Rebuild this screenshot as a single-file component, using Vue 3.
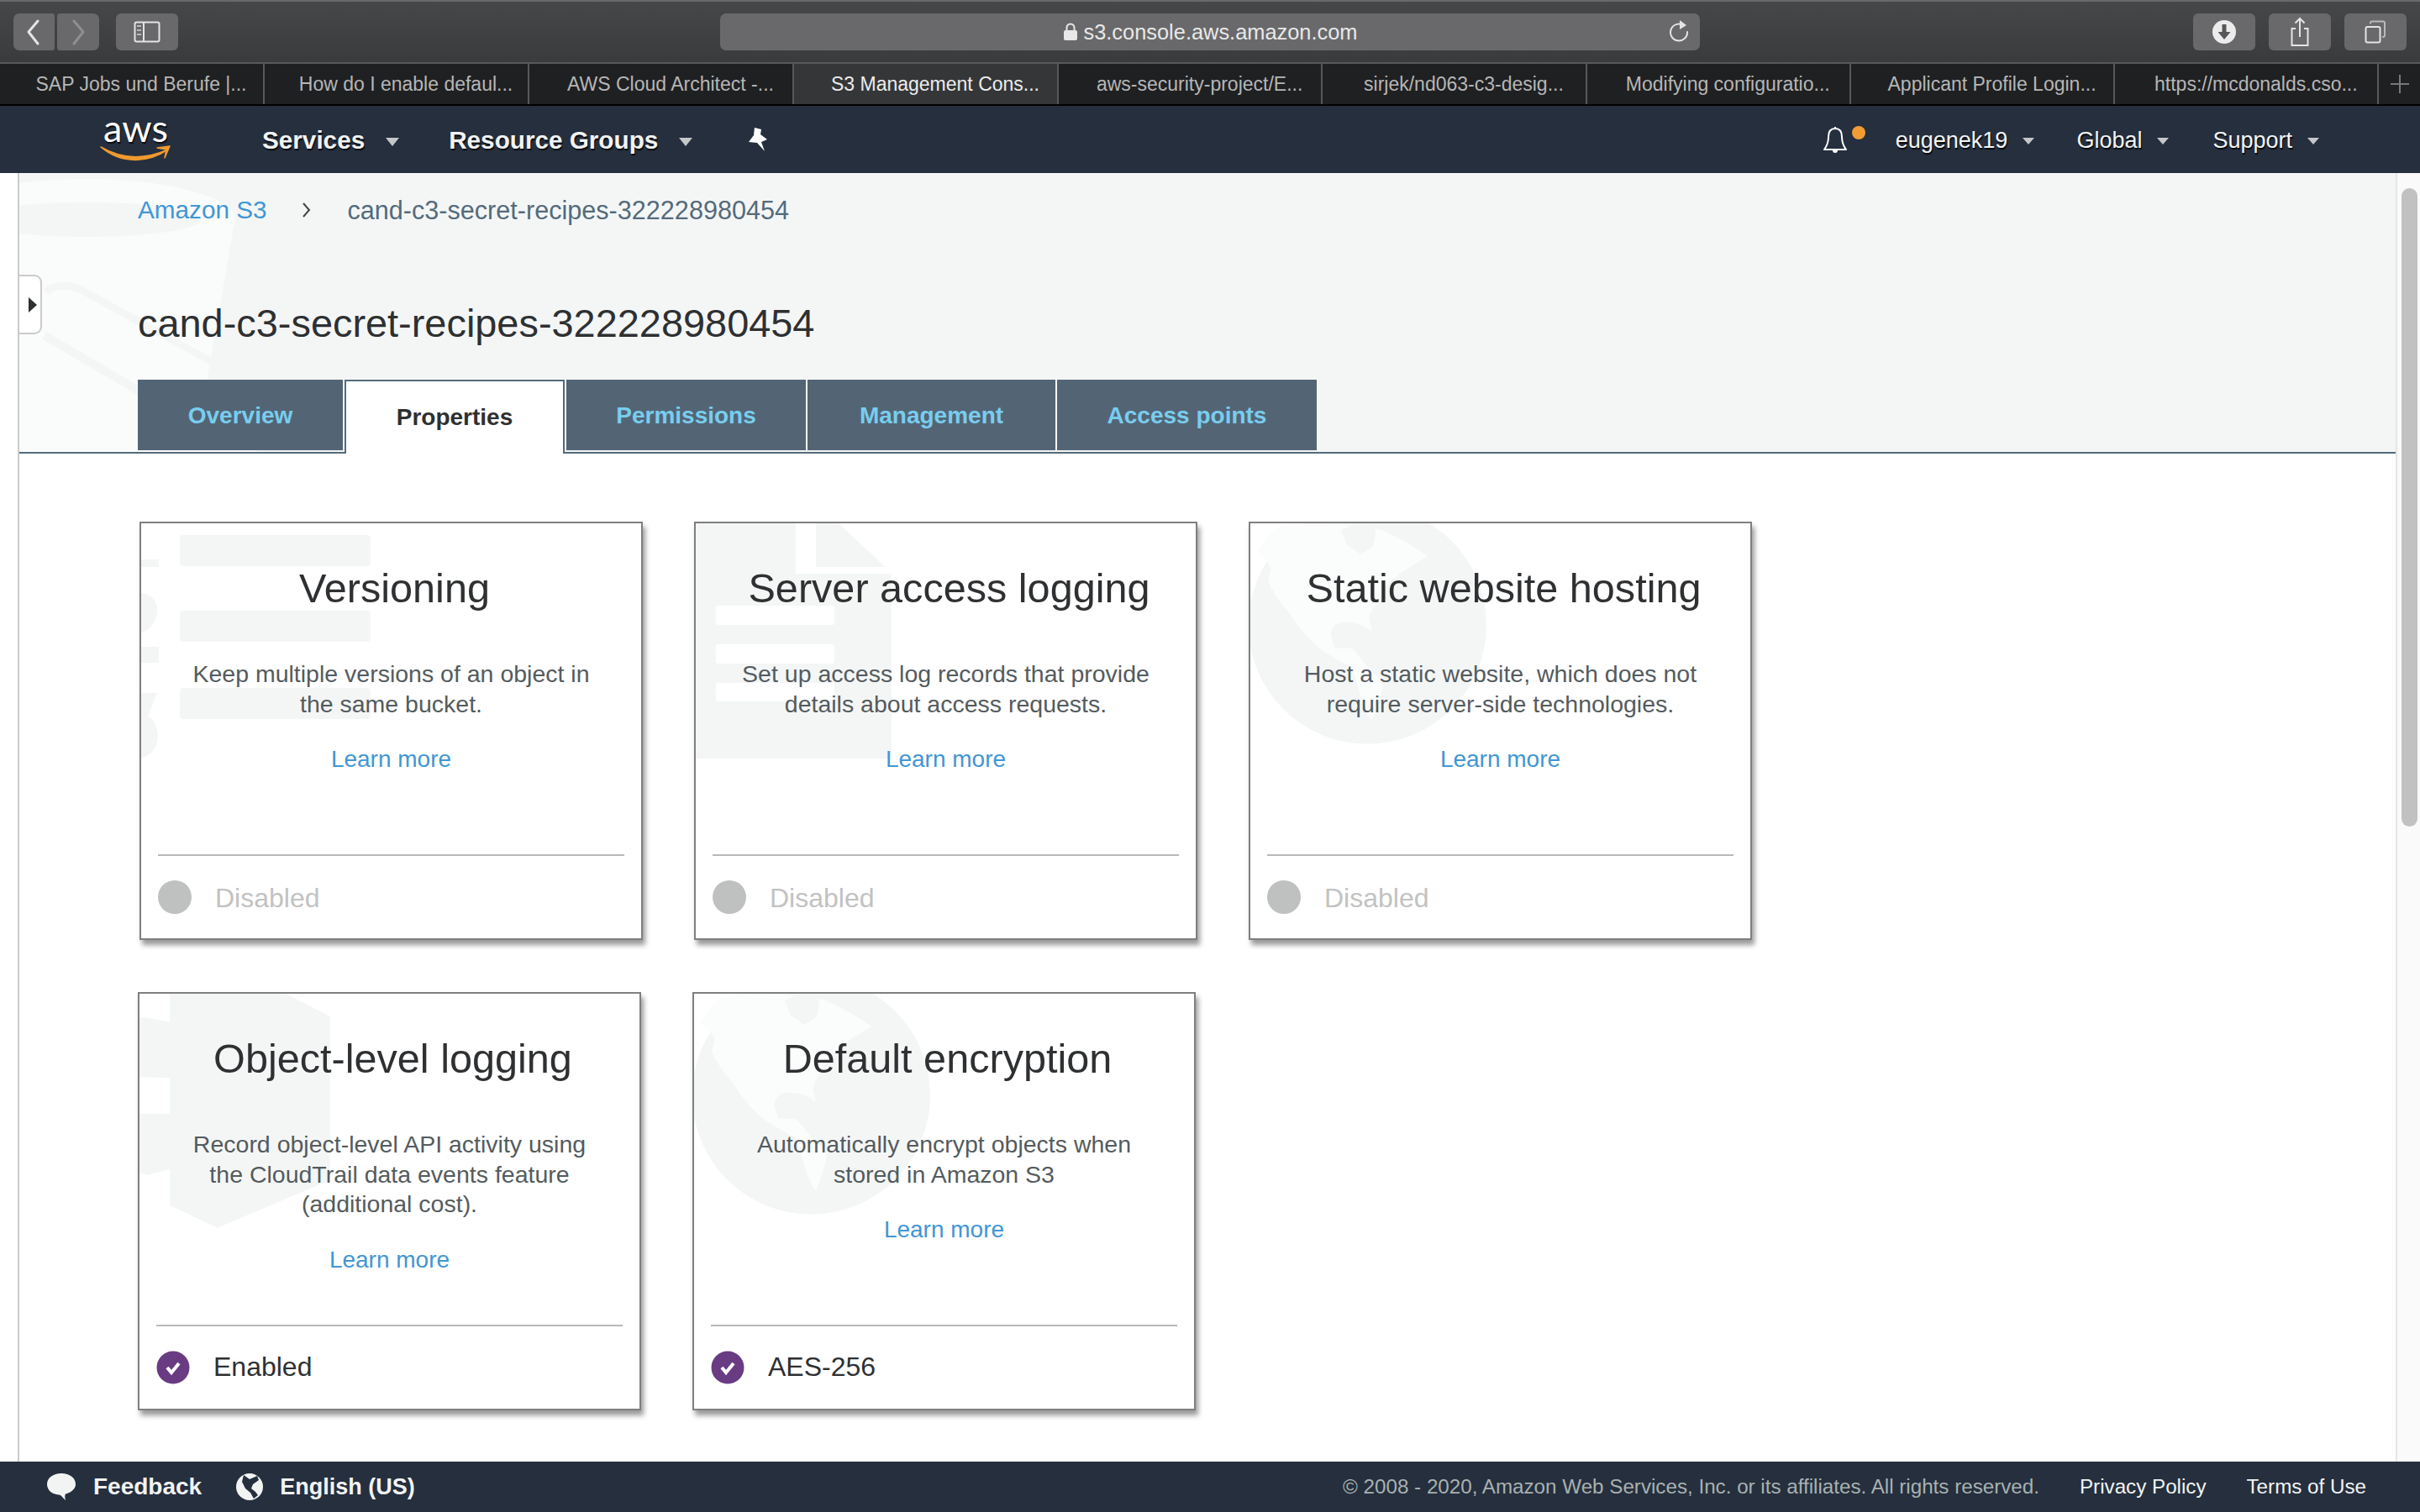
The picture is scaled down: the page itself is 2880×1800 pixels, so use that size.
<template>
  <div class="app">
    <!-- Safari toolbar -->
    <div class="toolbar">
      <div class="tool-btn nav-back">
        <svg width="24" height="34" viewBox="0 0 24 34"><polyline points="16,4 5,17 16,31" fill="none" stroke="#e4e4e4" stroke-width="3" stroke-linecap="round" stroke-linejoin="round" /></svg>
      </div>
      <div class="tool-btn nav-forward">
        <svg width="24" height="34" viewBox="0 0 24 34"><polyline points="7,4 18,17 7,31" fill="none" stroke="#8f8f91" stroke-width="3" stroke-linecap="round" stroke-linejoin="round" /></svg>
      </div>
      <div class="tool-btn sidebar-btn">
        <svg width="32" height="26" viewBox="0 0 32 26">
          <rect x="1.5" y="1.5" width="29" height="23" rx="2" fill="none" stroke="#e4e4e4" stroke-width="2" />
          <line x1="12" y1="1.5" x2="12" y2="24.5" stroke="#e4e4e4" stroke-width="2" />
          <path d="M4 6h5M4 11h5M4 16h5" stroke="#b9b9b9" stroke-width="2" />
        </svg>
      </div>
      <div class="url-bar">
        <svg class="lock" width="18" height="22" viewBox="0 0 18 22">
          <rect x="1" y="9" width="16" height="12" rx="2" fill="#e8e8e8" />
          <path d="M4.5 9V6a4.5 4.5 0 0 1 9 0v3" fill="none" stroke="#e8e8e8" stroke-width="2" />
        </svg>
        <span>s3.console.aws.amazon.com</span>
        <svg class="reload" width="26" height="30" viewBox="0 0 26 30">
          <path d="M19 8.5A10 10 0 1 0 23 16" fill="none" stroke="#e4e4e4" stroke-width="2" stroke-linecap="round" />
          <polygon points="14,2 22,8 14,13" fill="#e4e4e4" />
        </svg>
      </div>
      <div class="tool-btn action-btn download-btn">
        <svg width="30" height="30" viewBox="0 0 30 30">
          <circle cx="15" cy="15" r="14" fill="#ececec" />
          <path d="M12.5 6h5v9h5L15 24 7.5 15h5z" fill="#58585a" />
        </svg>
      </div>
      <div class="tool-btn action-btn">
        <svg width="24" height="36" viewBox="0 0 24 36">
          <path d="M7 14H2.5v20h19V14H17" fill="none" stroke="#e4e4e4" stroke-width="2" />
          <path d="M12 24V2M6.5 7.5 12 2l5.5 5.5" fill="none" stroke="#e4e4e4" stroke-width="2" />
        </svg>
      </div>
      <div class="tool-btn action-btn">
        <svg width="26" height="28" viewBox="0 0 26 28">
          <rect x="1.5" y="8" width="17" height="18.5" rx="2" fill="none" stroke="#e4e4e4" stroke-width="2" />
          <path d="M7 4.5V3.5a2 2 0 0 1 2-2h13a2 2 0 0 1 2 2V18a2 2 0 0 1-2 2h-1" fill="none" stroke="#b9b9b9" stroke-width="2" />
        </svg>
      </div>
    </div>

    <!-- Safari tabs -->
    <div class="browser-tabs">
      <div
        v-for="tab in browserTabs"
        :key="tab.label"
        class="browser-tab"
        :class="{ active: tab.active }"
      >{{ tab.label }}</div>
      <div class="new-tab">
        <svg width="24" height="24" viewBox="0 0 24 24"><path d="M12 1v22M1 12h22" stroke="#77787a" stroke-width="2" /></svg>
      </div>
    </div>

    <!-- AWS navbar -->
    <header class="navbar">
      <svg class="aws-logo" width="130" height="83" viewBox="0 -8 130 83">
        <text x="23" y="37" class="aws-text">aws</text>
        <path d="M20 43C42 56 68 60 100 46C74 64 42 62 20 43Z" fill="#f09a2f" stroke="#f09a2f" stroke-width="1.5" stroke-linejoin="round" />
        <path d="M87 44 102 42 96 56 98 46z" fill="#f09a2f" stroke="#f09a2f" stroke-width="1.5" stroke-linejoin="round" />
      </svg>
      <div class="nav-main services">Services<i class="caret"></i></div>
      <div class="nav-main groups">Resource Groups<i class="caret"></i></div>
      <svg class="pin" width="24" height="28" viewBox="0 0 24 28">
        <path d="M8 0 16 2 15 8 23 14 16 17 20 28 11 18 1 17 7 9z" fill="#fff" />
      </svg>
      <div class="nav-right">
        <svg class="bell" width="32" height="36" viewBox="0 0 32 36">
          <path d="M16 3c-6 0-8 4-8 10 0 7-2 11-5 15h26c-3-4-5-8-5-15 0-6-2-10-8-10z" fill="none" stroke="#fff" stroke-width="2" stroke-linejoin="round" />
          <path d="M16 1v2" stroke="#fff" stroke-width="2" />
          <path d="M13 29a3 3 0 0 0 6 0z" fill="#fff" />
        </svg>
        <i class="bell-dot"></i>
        <div class="nav-sub user">eugenek19<i class="caret small"></i></div>
        <div class="nav-sub region">Global<i class="caret small"></i></div>
        <div class="nav-sub support">Support<i class="caret small"></i></div>
      </div>
    </header>

    <div class="page">
      <div class="gutter"></div>
      <main class="content">
        <section class="head">
          <svg class="bucket" width="300" height="332" viewBox="0 0 900 996">
            <ellipse cx="240" cy="166" rx="530" ry="145" fill="#fafbfb" />
            <polygon points="-10,166 770,166 670,740 850,740 850,996 -10,996" fill="#fafbfb" />
            <ellipse cx="240" cy="166" rx="410" ry="62" fill="#f4f6f6" />
            <path d="M95 425C130 395 190 395 235 425L725 695C765 725 755 745 700 745" fill="none" stroke="#f4f6f6" stroke-width="26" />
            <path d="M90 580 430 780" fill="none" stroke="#f4f6f6" stroke-width="30" />
            <path d="M745 640C760 600 800 590 835 680L850 740" fill="none" stroke="#f4f6f6" stroke-width="16" />
          </svg>
          <div class="side-handle"><i></i></div>
          <nav class="crumbs">
            <a class="crumb-link">Amazon S3</a>
            <svg width="11" height="20" viewBox="0 0 11 20"><polyline points="2,2 9,10 2,18" fill="none" stroke="#444" stroke-width="2" /></svg>
            <span>cand-c3-secret-recipes-322228980454</span>
          </nav>
          <h1>cand-c3-secret-recipes-322228980454</h1>
          <div class="tabs">
            <div
              v-for="tab in tabs"
              :key="tab.label"
              class="tab"
              :class="{ selected: tab.selected }"
              :style="{ width: tab.width + 'px' }"
            >{{ tab.label }}</div>
          </div>
        </section>

        <section class="cards">
          <div v-for="(row, r) in rows" :key="r" class="card-row" :class="'row-' + r">
            <article v-for="card in row" :key="card.title" class="card">
              <!-- Versioning watermark -->
              <svg v-if="card.mark === 'list'" class="mark" width="300" height="290" viewBox="0 0 300 290">
                <rect x="46" y="14" width="227" height="37" rx="4" />
                <rect x="46" y="104" width="227" height="37" rx="4" />
                <rect x="46" y="196" width="227" height="37" rx="4" />
                <rect x="0" y="43" width="21" height="9" />
                <path d="M0 83C14 85 21 95 19 108C17 120 8 127 0 131z" />
                <rect x="0" y="147" width="21" height="19" />
                <path d="M0 202H19L8 230C20 236 22 253 18 264C14 274 6 278 0 280z" />
              </svg>
              <!-- Server logging watermark -->
              <svg v-else-if="card.mark === 'doc'" class="mark" width="240" height="285" viewBox="0 0 240 285">
                <path d="M0 0H119V60H233V280H0z" />
                <polygon points="143,0 170,0 226,52 143,52" />
                <rect x="24" y="98" width="141" height="23" rx="3" fill="#fff" />
                <rect x="24" y="144" width="141" height="23" rx="3" fill="#fff" />
                <rect x="24" y="190" width="141" height="22" rx="3" fill="#fff" />
              </svg>
              <!-- Globe watermark -->
              <svg v-else-if="card.mark === 'globe'" class="mark" width="300" height="270" viewBox="6 24 900 810">
                <circle cx="424" cy="387" r="425" />
                <path d="M30 125C60 80 80 50 110 35C190 20 270 25 330 28L470 45 560 90 640 140 560 190C520 220 490 240 480 270C460 300 440 330 430 360L440 410C425 400 410 390 395 385C360 375 330 375 310 385C295 400 290 420 295 430C300 450 305 465 310 470L370 470 420 530C450 560 470 580 480 600C470 650 455 700 440 730C420 700 410 670 400 640L370 540C320 510 270 490 230 450C200 420 170 385 150 350C115 310 85 270 70 230L80 180z" fill="#fbfcfc" />
                <path d="M330 50C350 35 380 28 400 28L455 45 445 105 400 135 350 100z" />
              </svg>
              <!-- Hexagon watermark -->
              <svg v-else class="mark" width="240" height="280" viewBox="18 24 720 840">
                <polygon points="126,18 530,18 698,105 698,690 296,860 126,780" />
                <polygon points="18,110 35,107 126,125 126,325 18,322" />
                <polygon points="18,453 126,453 126,650 45,672 18,662" />
              </svg>

              <h2>{{ card.title }}</h2>
              <p class="desc">
                <span v-for="line in card.lines" :key="line">{{ line }}</span>
              </p>
              <a class="learn">Learn more</a>
              <div class="status" :class="{ on: card.on }">
                <svg v-if="card.on" width="40" height="40" viewBox="0 0 40 40">
                  <circle cx="20" cy="20" r="19.5" fill="#693b83" />
                  <polyline points="13,20 18,26 27,15" fill="none" stroke="#fff" stroke-width="4" />
                </svg>
                <i v-else class="off-dot"></i>
                <span>{{ card.status }}</span>
              </div>
            </article>
          </div>
        </section>
      </main>
      <div class="scroller"><div class="thumb"></div></div>
    </div>

    <!-- AWS footer -->
    <footer class="footer">
      <svg width="36" height="34" viewBox="0 0 36 34">
        <path d="M18 1C8 1 1 6.500 1 14c0 7 6 12 14 12.500 3 0 4 3 8 6.500-1-3-1-6 0-7.500 7-2 12-6 12-11.500C35 6.500 28 1 18 1z" fill="#f2f3f3" />
      </svg>
      <span class="foot-label feedback">Feedback</span>
      <svg class="foot-globe" width="34" height="34" viewBox="0 0 34 34">
        <circle cx="17" cy="17" r="16" fill="#f2f3f3" />
        <path d="M10 3 17 8 26 4 28 9 21 14 19 19 24 23 27 27 22 31 18 24 12 19 8 11z" fill="#252f3e" />
      </svg>
      <span class="foot-label lang">English (US)</span>
      <div class="foot-right">
        <span class="copy">© 2008 - 2020, Amazon Web Services, Inc. or its affiliates. All rights reserved.</span>
        <a>Privacy Policy</a>
        <a>Terms of Use</a>
      </div>
    </footer>
  </div>
</template>

<script setup>
const browserTabs = [
  { label: 'SAP Jobs und Berufe |...' },
  { label: 'How do I enable defaul...' },
  { label: 'AWS Cloud Architect -...' },
  { label: 'S3 Management Cons...', active: true },
  { label: 'aws-security-project/E...' },
  { label: 'sirjek/nd063-c3-desig...' },
  { label: 'Modifying configuratio...' },
  { label: 'Applicant Profile Login...' },
  { label: 'https://mcdonalds.cso...' }
]

const tabs = [
  { label: 'Overview', width: 244 },
  { label: 'Properties', width: 262, selected: true },
  { label: 'Permissions', width: 285 },
  { label: 'Management', width: 295 },
  { label: 'Access points', width: 309 }
]

const rows = [
  [
    {
      title: 'Versioning',
      lines: ['Keep multiple versions of an object in', 'the same bucket.'],
      status: 'Disabled',
      mark: 'list'
    },
    {
      title: 'Server access logging',
      lines: ['Set up access log records that provide', 'details about access requests.'],
      status: 'Disabled',
      mark: 'doc'
    },
    {
      title: 'Static website hosting',
      lines: ['Host a static website, which does not', 'require server-side technologies.'],
      status: 'Disabled',
      mark: 'globe'
    }
  ],
  [
    {
      title: 'Object-level logging',
      lines: ['Record object-level API activity using', 'the CloudTrail data events feature', '(additional cost).'],
      status: 'Enabled',
      mark: 'hex',
      on: true
    },
    {
      title: 'Default encryption',
      lines: ['Automatically encrypt objects when', 'stored in Amazon S3'],
      status: 'AES-256',
      mark: 'globe',
      on: true
    }
  ]
]
</script>

<style>
html,
body {
  margin: 0;
  overflow: hidden;
  background: #fff;
}
</style>

<style scoped>
.app {
  width: 2880px;
  height: 1800px;
  display: flex;
  flex-direction: column;
  font-family: "Liberation Sans", Arial, sans-serif;
  color: #2e3032;
}

/* Safari chrome */
.toolbar {
  height: 76px;
  box-sizing: border-box;
  display: flex;
  align-items: flex-start;
  padding: 14px 0 0 16px;
  border-top: 2px solid #69696b;
  border-bottom: 2px solid #58585a;
  background: linear-gradient(#464749, #3a3b3d);
}

.tool-btn {
  height: 44px;
  background: #69696b;
  border-radius: 6px;
  display: flex;
  align-items: center;
  justify-content: center;
}

.nav-back {
  width: 49px;
  border-radius: 7px 3px 3px 7px;
}

.nav-forward {
  width: 50px;
  margin-left: 3px;
  border-radius: 3px 7px 7px 3px;
}

.sidebar-btn {
  width: 74px;
  margin-left: 20px;
}

.url-bar {
  width: 1166px;
  height: 44px;
  margin-left: 645px;
  border-radius: 7px;
  background: #69696b;
  position: relative;
  display: flex;
  align-items: center;
  justify-content: center;
  font-size: 25.4px;
  color: #e8e8e8;
}

.lock {
  margin-right: 7px;
}

.reload {
  position: absolute;
  right: 12px;
  top: 6px;
}

.action-btn {
  width: 74px;
  margin-left: 16px;
}

.download-btn {
  margin-left: 587px;
}

.browser-tabs {
  height: 50px;
  box-sizing: border-box;
  display: flex;
  background: #1f2022;
  border-bottom: 2px solid #000;
}

.browser-tab {
  width: 315px;
  box-sizing: border-box;
  padding-left: 23px;
  border-right: 2px solid #57585a;
  font-size: 23px;
  line-height: 48px;
  color: #b6b6b6;
  text-align: center;
  white-space: nowrap;
  overflow: hidden;
}

.browser-tab:nth-child(n + 5) {
  width: 314.3px;
}

.browser-tab.active {
  background: #353638;
  color: #ececec;
}

.new-tab {
  flex: 1;
  display: flex;
  align-items: center;
  justify-content: center;
}

/* AWS navbar */
.navbar {
  height: 80px;
  box-sizing: border-box;
  padding-top: 2px;
  display: flex;
  align-items: center;
  background: #252f3e;
  color: #f2f3f3;
  text-shadow: 1px 2px 1px rgba(0, 0, 0, 0.8);
}

.aws-logo {
  margin: -9px 0 -6px 100px;
}

.aws-text {
  font-family: Lato, "Liberation Sans", sans-serif;
  font-size: 45px;
  fill: #fff;
}

.nav-main {
  font-size: 29.7px;
  font-weight: 700;
  display: flex;
  align-items: center;
}

.services {
  margin-left: 82px;
}

.groups {
  margin-left: 59px;
}

.caret {
  display: block;
  margin-left: 25px;
  margin-top: 4px;
  border-left: 8px solid transparent;
  border-right: 8px solid transparent;
  border-top: 10px solid #c4c6c8;
}

.caret.small {
  margin-left: 18px;
  margin-top: 2px;
  border-left-width: 7px;
  border-right-width: 7px;
  border-top-width: 8px;
}

.pin {
  margin-left: 66px;
  margin-top: -2px;
}

.nav-right {
  margin-left: auto;
  padding-right: 120px;
  display: flex;
  align-items: center;
}

.bell {
  margin-top: 2px;
}

.bell-dot {
  width: 16px;
  height: 16px;
  border-radius: 50%;
  background: #f29c33;
  margin: -18px 0 0 4px;
}

.nav-sub {
  font-size: 27px;
  display: flex;
  align-items: center;
}

.user {
  margin-left: 36px;
}

.region {
  margin-left: 50px;
}

.support {
  margin-left: 52px;
}

/* Page body */
.page {
  flex: 1;
  min-height: 0;
  display: flex;
}

.gutter {
  width: 21px;
  border-right: 2px solid #cbcbcb;
}

.content {
  flex: 1;
  min-width: 0;
  overflow: hidden;
}

.head {
  position: relative;
  height: 334px;
  box-sizing: border-box;
  padding: 0 0 0 141px;
  background: #f4f6f6;
  border-bottom: 2px solid #546b7b;
}

.bucket {
  position: absolute;
  left: 0;
  top: 0;
}

.side-handle {
  position: absolute;
  left: -2px;
  top: 121px;
  width: 29px;
  height: 71px;
  box-sizing: border-box;
  background: #fff;
  border: 2px solid #cbcbcb;
  border-left: 0;
  border-radius: 0 9px 9px 0;
  display: flex;
  align-items: center;
  padding-left: 13px;
}

.side-handle i {
  border-top: 9px solid transparent;
  border-bottom: 9px solid transparent;
  border-left: 10px solid #2e3032;
}

.crumbs {
  position: relative;
  height: 88px;
  display: flex;
  align-items: center;
  font-size: 30.6px;
  color: #546b7b;
}

.crumb-link {
  font-size: 29.7px;
  color: #4296d3;
}

.crumbs svg {
  margin: 0 43px 0 42px;
}

h1 {
  position: relative;
  margin: 64px 0 0;
  height: 55px;
  font-size: 46.9px;
  line-height: 55px;
  font-weight: 400;
  color: #2e3032;
}

.tabs {
  position: absolute;
  left: 141px;
  top: 246px;
  display: flex;
  gap: 2px;
}

.tab {
  height: 84px;
  box-sizing: border-box;
  background: #536575;
  color: #79cdee;
  font-size: 28px;
  font-weight: 700;
  line-height: 85px;
  text-align: center;
}

.tab.selected {
  height: 88px;
  background: #fff;
  color: #2e3032;
  border: 2px solid #546b7b;
  border-bottom: 0;
  line-height: 86px;
  margin-bottom: -4px;
}

.cards {
  padding-top: 81px;
}

.card-row {
  display: flex;
  gap: 61px;
  margin-bottom: 62px;
  padding-left: 141px;
}

.row-0 {
  padding-left: 143px;
}

.card {
  position: relative;
  width: 599px;
  height: 498px;
  box-sizing: border-box;
  display: flex;
  flex-direction: column;
  align-items: center;
  background: #fff;
  border: 2px solid #7f7f7f;
  box-shadow: 3px 6px 6px rgba(0, 0, 0, 0.4);
}

.mark {
  position: absolute;
  left: 0;
  top: 0;
  fill: #f4f6f6;
}

h2 {
  position: relative;
  margin: 49px 0 0 8px;
  font-size: 48.6px;
  line-height: 56px;
  font-weight: 400;
  color: #2e3032;
}

.desc {
  position: relative;
  margin: 57px 0 0;
  font-size: 28.5px;
  line-height: 35.5px;
  text-align: center;
  color: #545b5e;
}

.desc span {
  display: block;
}

.learn {
  position: relative;
  margin-top: 30px;
  font-size: 28px;
  line-height: 36px;
  color: #4296d3;
}

.status {
  position: absolute;
  left: 20px;
  right: 20px;
  bottom: 0;
  height: 98px;
  border-top: 2px solid #b8b8b8;
  display: flex;
  align-items: center;
  gap: 28px;
  font-size: 32px;
  color: #c2c2c2;
}

.status span {
  margin-top: 3px;
}

.status.on {
  color: #2e3032;
}

.status.on span {
  margin-top: -2px;
}

.off-dot {
  display: block;
  flex: none;
  width: 40px;
  height: 40px;
  border-radius: 50%;
  background: #bfc1c0;
}

.scroller {
  width: 29px;
  box-sizing: border-box;
  background: #fafafa;
  border-left: 2px solid #e6e6e6;
  padding: 18px 3px 0 5px;
}

.thumb {
  height: 760px;
  border-radius: 10px;
  background: #c1c1c1;
}

/* AWS footer */
.footer {
  height: 60px;
  flex: none;
  display: flex;
  align-items: center;
  padding-left: 55px;
  background: #252f3e;
}

.foot-label {
  margin-left: 20px;
  font-size: 28px;
  font-weight: 700;
  color: #f2f3f3;
}

.foot-label.lang {
  margin-left: 19px;
  font-size: 27px;
}

.foot-globe {
  margin-left: 40px;
}

.foot-right {
  margin-left: auto;
  padding-right: 64px;
  display: flex;
  align-items: center;
  gap: 48px;
  font-size: 24.2px;
  color: #f2f3f3;
}

.copy {
  color: #a9b1af;
}
</style>
